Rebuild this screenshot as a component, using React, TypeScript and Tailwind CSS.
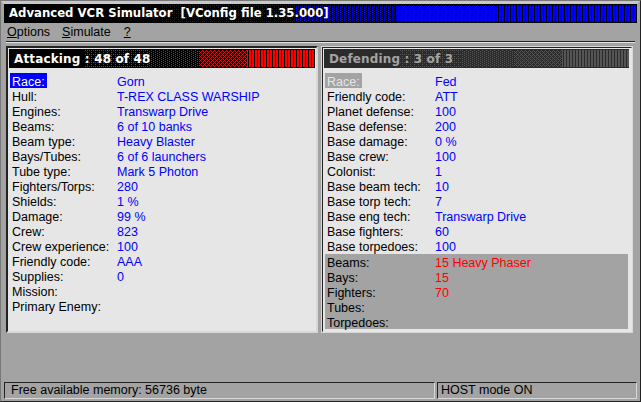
function Dither({ id, color, w, h, stops }: { id: string; color: string; w: number; h: number; stops: [number, number, number][] }) {
  return (
    <svg className="absolute inset-0" width={w} height={h} shapeRendering="crispEdges">
      <defs>
        <pattern id={id + "1"} width="4" height="4" patternUnits="userSpaceOnUse">
          <rect x="0" y="1" width="1" height="1" fill={color} />
          <rect x="2" y="3" width="1" height="1" fill={color} />
          <rect x="2" y="1" width="1" height="1" fill={color} />
        </pattern>
        <pattern id={id + "2"} width="4" height="2" patternUnits="userSpaceOnUse">
          <rect x="0" y="0" width="1" height="1" fill={color} />
          <rect x="2" y="1" width="1" height="1" fill={color} />
        </pattern>
        <pattern id={id + "3"} width="4" height="4" patternUnits="userSpaceOnUse">
          <rect x="0" y="0" width="1" height="1" fill={color} />
          <rect x="2" y="0" width="1" height="1" fill={color} />
          <rect x="1" y="1" width="1" height="1" fill={color} />
          <rect x="0" y="2" width="1" height="1" fill={color} />
          <rect x="2" y="2" width="1" height="1" fill={color} />
          <rect x="3" y="3" width="1" height="1" fill={color} />
        </pattern>
        <pattern id={id + "5"} width="3" height="2" patternUnits="userSpaceOnUse">
          <rect x="0" y="0" width="2" height="2" fill={color} />
        </pattern>
      </defs>
      {stops.map(([level, x0, x1]) => (
        <rect key={level} x={x0} y={1} width={x1 - x0} height={h - 2} fill={`url(#${id}${level})`} />
      ))}
    </svg>
  );
}

type Row = [string, string?];

const left: Row[] = [
  ["Race:", "Gorn"],
  ["Hull:", "T-REX CLASS WARSHIP"],
  ["Engines:", "Transwarp Drive"],
  ["Beams:", "6 of 10 banks"],
  ["Beam type:", "Heavy Blaster"],
  ["Bays/Tubes:", "6 of 6 launchers"],
  ["Tube type:", "Mark 5 Photon"],
  ["Fighters/Torps:", "280"],
  ["Shields:", "1 %"],
  ["Damage:", "99 %"],
  ["Crew:", "823"],
  ["Crew experience:", "100"],
  ["Friendly code:", "AAA"],
  ["Supplies:", "0"],
  ["Mission:"],
  ["Primary Enemy:"],
];

const rightTop: Row[] = [
  ["Race:", "Fed"],
  ["Friendly code:", "ATT"],
  ["Planet defense:", "100"],
  ["Base defense:", "200"],
  ["Base damage:", "0 %"],
  ["Base crew:", "100"],
  ["Colonist:", "1"],
  ["Base beam tech:", "10"],
  ["Base torp tech:", "7"],
  ["Base eng tech:", "Transwarp Drive"],
  ["Base fighters:", "60"],
  ["Base torpedoes:", "100"],
];

const rightBottom: Row[] = [
  ["Beams:", "15 Heavy Phaser"],
  ["Bays:", "15"],
  ["Fighters:", "70"],
  ["Tubes:"],
  ["Torpedoes:"],
];

function DataRow({ row, labelW, red, highlight }: { row: Row; labelW: string; red?: boolean; highlight?: string }) {
  const [label, value] = row;
  return (
    <div className="flex h-[15px] whitespace-nowrap leading-[19px]">
      <div className={labelW}>
        {highlight ? (
          <span className={`inline-block h-[15px] px-[2px] ${highlight}`}>{label}</span>
        ) : (
          <span className="pl-[2px]">{label}</span>
        )}
      </div>
      {value && <span className={red ? "text-[#ff0000]" : "text-[#0000ff]"}>{value}</span>}
    </div>
  );
}

export default function App() {
  return (
    <div className="flex h-[402px] w-[641px] flex-col overflow-hidden border border-b-[#222] border-l-[#777] border-r-[#222] border-t-[#777] bg-[#a3a3a3] [font-family:Liberation_Sans,sans-serif] text-[12.5px] text-black">
      <div className="flex flex-1 flex-col border-[3px] border-b-[2px] border-x-[#a3a3a3] border-b-[#a3a3a3] border-t-[#c8c8c8]">
        {/* Title bar */}
        <div className="relative flex h-[19px] w-[633px] shrink-0 items-center bg-black pl-[5px] [font-family:DejaVu_Sans,sans-serif] text-[11.7px] font-bold text-white">
          <Dither
            id="t"
            color="#0000ff"
            w={633}
            h={19}
            stops={[
              [1, 157, 290],
              [2, 290, 394],
              [3, 394, 493],
              [5, 493, 633],
            ]}
          />
          <span className="relative whitespace-pre">Advanced VCR Simulator  [VConfig file 1.35.000]</span>
        </div>

        {/* Menu */}
        <div className="flex h-[18px] shrink-0 items-center gap-[12px] pl-[3px]">
          <span><span className="underline">O</span>ptions</span>
          <span><span className="underline">S</span>imulate</span>
          <span className="ml-px underline">?</span>
        </div>
        <div className="mx-[2px] h-[2px] shrink-0 border-b border-t border-b-[#e6e6e6] border-t-[#222]" />

        {/* Panels */}
        <div className="mt-[3px] flex h-[287px] shrink-0 gap-[3px] pl-[2px]">
          <div className="flex w-[312px] flex-col border-2 border-b-[#d8d8d8] border-l-[#222] border-r-[#d8d8d8] border-t-[#222] bg-[#e6e6e6] px-px pt-px">
            <div className="relative flex h-[19px] shrink-0 items-center bg-black pl-[5px] [font-family:DejaVu_Sans,sans-serif] text-[12px] font-bold tracking-[0.15px] text-white">
              <Dither
                id="a"
                color="#ff0000"
                w={306}
                h={19}
                stops={[
                  [1, 76, 140],
                  [2, 140, 190],
                  [3, 190, 238],
                  [5, 238, 306],
                ]}
              />
              <span className="relative whitespace-pre">Attacking : 48 of 48</span>
            </div>
            <div className="pl-px pt-[5px]">
              {left.map((r, i) => (
                <DataRow key={r[0]} row={r} labelW="w-[107px]" highlight={i === 0 ? "bg-[#0000ff] text-white" : undefined} />
              ))}
            </div>
          </div>

          <div className="flex w-[312px] flex-col border border-[#d8d8d8] bg-[#e6e6e6]">
            <div className="flex flex-1 flex-col border border-[#222] border-b-[#e6e6e6] border-r-[#e6e6e6] pl-px pr-[2px] pt-px">
              <div className="relative flex h-[19px] shrink-0 items-center bg-[#2b2b2b] pl-[5px] [font-family:DejaVu_Sans,sans-serif] text-[12px] font-bold tracking-[0.15px] text-[#a3a3a3]">
                <Dither
                  id="d"
                  color="#555555"
                  w={306}
                  h={19}
                  stops={[
                    [1, 76, 140],
                    [2, 140, 190],
                    [3, 190, 238],
                    [5, 238, 306],
                  ]}
                />
                <span className="relative whitespace-pre">Defending : 3 of 3</span>
              </div>
              <div className="pl-px pt-[5px]">
                {rightTop.map((r, i) => (
                  <DataRow key={r[0]} row={r} labelW="w-[110px]" highlight={i === 0 ? "bg-[#a3a3a3] text-[#e6e6e6]" : undefined} />
                ))}
                <div className="mt-px w-[303px] bg-[#a3a3a3]">
                  {rightBottom.map((r) => (
                    <DataRow key={r[0]} row={r} labelW="w-[110px]" red />
                  ))}
                </div>
              </div>
            </div>
          </div>
        </div>

        <div className="flex-1" />

        {/* Status bar */}
        <div className="flex h-[17px] shrink-0 gap-[2px]">
          <div className="flex flex-1 items-center border border-b-[#d8d8d8] border-l-[#222] border-r-[#d8d8d8] border-t-[#222] pl-[6px]">
            Free available memory: 56736 byte
          </div>
          <div className="flex w-[200px] items-center border border-b-[#d8d8d8] border-l-[#222] border-r-[#d8d8d8] border-t-[#222] pl-[3px]">
            HOST mode ON
          </div>
        </div>
      </div>
    </div>
  );
}
